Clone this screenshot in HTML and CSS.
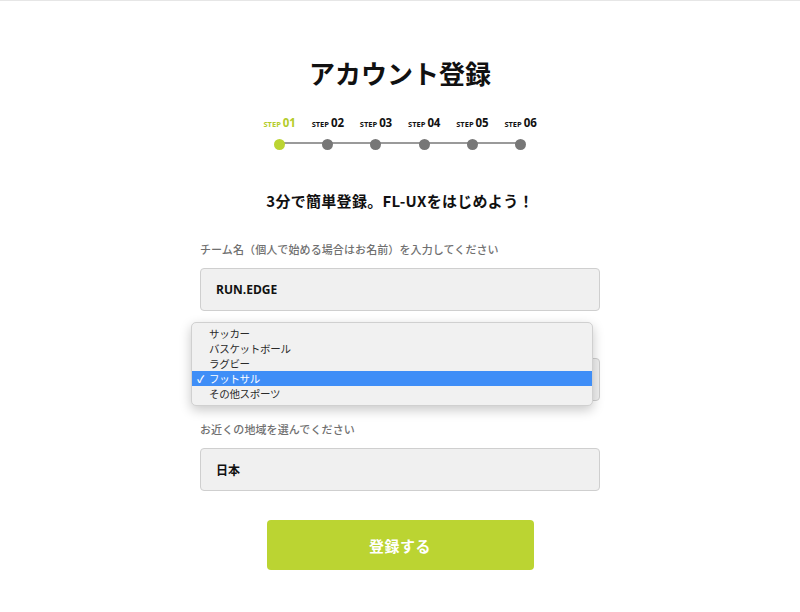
FILE: index.html
```html
<!DOCTYPE html>
<html lang="ja">
<head>
<meta charset="utf-8">
<title>アカウント登録</title>
<link rel="stylesheet" href="styles.css">
</head>
<body>
<div class="page">
  <h1 class="title">アカウント登録</h1>
  <ol class="steps">
    <li class="step active"><span class="step-label"><small>STEP</small>01</span><span class="dot"></span></li>
    <li class="step"><span class="step-label"><small>STEP</small>02</span><span class="dot"></span></li>
    <li class="step"><span class="step-label"><small>STEP</small>03</span><span class="dot"></span></li>
    <li class="step"><span class="step-label"><small>STEP</small>04</span><span class="dot"></span></li>
    <li class="step"><span class="step-label"><small>STEP</small>05</span><span class="dot"></span></li>
    <li class="step"><span class="step-label"><small>STEP</small>06</span><span class="dot"></span></li>
  </ol>
  <p class="lead">3分で簡単登録。FL-UXをはじめよう！</p>
  <form class="form">
    <div class="field">
      <label class="label">チーム名（個人で始める場合はお名前）を入力してください</label>
      <div class="input">RUN.EDGE</div>
    </div>
    <div class="field field-select">
      <span class="label label-spacer"></span>
      <div class="input"></div>
      <ul class="popup">
        <li>サッカー</li>
        <li>バスケットボール</li>
        <li>ラグビー</li>
        <li class="selected"><span class="check">✓</span>フットサル</li>
        <li>その他スポーツ</li>
      </ul>
    </div>
    <div class="field">
      <label class="label">お近くの地域を選んでください</label>
      <div class="input">日本</div>
    </div>
    <button type="button" class="submit">登録する</button>
  </form>
</div>
</body>
</html>
```

FILE: styles.css
```css
* { box-sizing: border-box; }
html, body { margin: 0; padding: 0; background: #fff; }
body {
  font-family: "Open Sans", "Noto Sans CJK JP", sans-serif;
  color: #111;
  border-top: 1px solid #e6e6e6;
  height: 612px;
  overflow: hidden;
}
.page {
  width: 400px;
  margin: 0 auto;
  padding-top: 54px;
  display: flex;
  flex-direction: column;
  align-items: center;
}
.title {
  margin: 0;
  font-family: "Noto Sans CJK JP", sans-serif;
  font-size: 26px;
  line-height: 36px;
  font-weight: 700;
}
.steps {
  list-style: none;
  margin: 24px 0 0;
  padding: 0;
  display: flex;
  position: relative;
}
.steps::before {
  content: "";
  position: absolute;
  left: 24px;
  right: 24px;
  top: 27px;
  height: 2px;
  background: #9a9a9a;
}
.step {
  width: 48.2px;
  display: flex;
  flex-direction: column;
  align-items: center;
  gap: 7px;
  position: relative;
}
.step-label {
  font-family: "Open Sans", sans-serif;
  font-weight: 700;
  font-size: 11.5px;
  line-height: 16px;
  color: #111;
  white-space: nowrap;
  letter-spacing: -0.2px;
}
.step-label small {
  font-size: 7.5px;
  margin-right: 2px;
  letter-spacing: 0;
}
.dot {
  width: 11px;
  height: 11px;
  border-radius: 50%;
  background: #777;
}
.step.active .step-label { color: #b3cc2a; }
.step.active .dot { background: #bbd432; }
.lead {
  margin: 40px 0 0;
  font-family: "Noto Sans CJK JP", sans-serif;
  font-size: 15px;
  line-height: 22px;
  font-weight: 700;
  letter-spacing: 0.3px;
  color: #111;
}
.form {
  width: 400px;
  margin-top: 28px;
  display: flex;
  flex-direction: column;
}
.field {
  display: flex;
  flex-direction: column;
  gap: 10px;
  margin-bottom: 19px;
  position: relative;
}
.label {
  font-family: "Noto Sans CJK JP", sans-serif;
  font-size: 11px;
  line-height: 18px;
  letter-spacing: 0.1px;
  color: #707070;
  font-weight: 500;
}
.label-spacer { height: 18px; }
.input {
  height: 43px;
  background: #f0f0f0;
  border: 1px solid #cfcfcf;
  border-radius: 4px;
  padding: 0 15px;
  display: flex;
  align-items: center;
  font-family: "Open Sans", "Noto Sans CJK JP", sans-serif;
  font-size: 12px;
  font-weight: 700;
  color: #111;
}
.popup {
  position: absolute;
  left: -9px;
  top: -8px;
  width: 402px;
  margin: 0;
  padding: 3px 0 4px;
  list-style: none;
  background: #f1f1f1;
  border: 1px solid #d0d0d0;
  border-radius: 5px;
  box-shadow: 0 4px 12px rgba(0,0,0,0.22);
  font-family: "Noto Sans CJK JP", sans-serif;
  font-size: 10.5px;
  letter-spacing: -0.3px;
  color: #2a2a2a;
}
.popup li {
  height: 15px;
  line-height: 15px;
  padding-left: 17px;
  position: relative;
}
.popup li.selected {
  background: #3f8ef7;
  color: #fff;
}
.check {
  position: absolute;
  left: 5px;
  top: 0;
  font-size: 10px;
  font-weight: 700;
}
.submit {
  align-self: center;
  margin-top: 10px;
  width: 267px;
  height: 50px;
  border: none;
  border-radius: 4px;
  background: #bbd432;
  color: #fff;
  font-family: "Noto Sans CJK JP", sans-serif;
  font-size: 15px;
  font-weight: 700;
  letter-spacing: 0.5px;
}
```
